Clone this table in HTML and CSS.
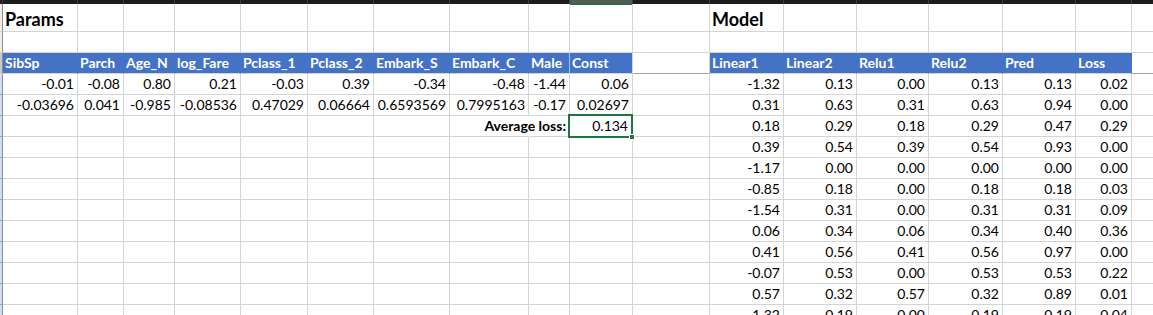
FILE: index.html
```html
<!DOCTYPE html>
<html lang="en">
<head>
<meta charset="utf-8">
<title>Params / Model</title>
<link rel="stylesheet" href="styles.css">
</head>
<body>
<div class="sheet">
  <!-- column header strip -->
  <div class="t"></div><div class="t"></div><div class="t"></div><div class="t"></div><div class="t"></div><div class="t"></div><div class="t"></div><div class="t"></div><div class="t"></div><div class="t"></div><div class="t on"></div><div class="t"></div><div class="t"></div><div class="t"></div><div class="t"></div><div class="t"></div><div class="t"></div><div class="t"></div><div class="t"></div>

  <!-- row 1 -->
  <div class="s"></div>
  <div class="c title">Params</div>
  <div class="c"></div><div class="c"></div><div class="c"></div><div class="c"></div><div class="c"></div><div class="c"></div><div class="c"></div><div class="c"></div><div class="c"></div><div class="c"></div>
  <div class="c title">Model</div>
  <div class="c"></div><div class="c"></div><div class="c"></div><div class="c"></div><div class="c"></div><div class="c"></div>

  <!-- row 2 -->
  <div class="s"></div>
  <div class="c"></div><div class="c"></div><div class="c"></div><div class="c"></div><div class="c"></div><div class="c"></div><div class="c"></div><div class="c"></div><div class="c"></div><div class="c"></div><div class="c"></div><div class="c"></div><div class="c"></div><div class="c"></div><div class="c"></div><div class="c"></div><div class="c"></div><div class="c"></div>

  <!-- row 3: headers -->
  <div class="s hs"></div>
  <div class="c h">SibSp</div><div class="c h">Parch</div><div class="c h">Age_N</div><div class="c h">log_Fare</div><div class="c h">Pclass_1</div><div class="c h">Pclass_2</div><div class="c h">Embark_S</div><div class="c h">Embark_C</div><div class="c h split">Male</div><div class="c h last">Const</div>
  <div class="c hb"></div>
  <div class="c h">Linear1</div><div class="c h">Linear2</div><div class="c h">Relu1</div><div class="c h">Relu2</div><div class="c h">Pred</div><div class="c h">Loss</div>
  <div class="c hb"></div>

  <!-- row 4 -->
  <div class="s sel"></div>
  <div class="c">-0.01</div><div class="c">-0.08</div><div class="c">0.80</div><div class="c">0.21</div><div class="c">-0.03</div><div class="c">0.39</div><div class="c">-0.34</div><div class="c">-0.48</div><div class="c">-1.44</div><div class="c">0.06</div>
  <div class="c"></div>
  <div class="c">-1.32</div><div class="c">0.13</div><div class="c">0.00</div><div class="c">0.13</div><div class="c">0.13</div><div class="c">0.02</div>
  <div class="c"></div>

  <!-- row 5 -->
  <div class="s sel"></div>
  <div class="c">-0.03696</div><div class="c">0.041</div><div class="c">-0.985</div><div class="c">-0.08536</div><div class="c">0.47029</div><div class="c">0.06664</div><div class="c">0.6593569</div><div class="c">0.7995163</div><div class="c">-0.17</div><div class="c">0.02697</div>
  <div class="c"></div>
  <div class="c">0.31</div><div class="c">0.63</div><div class="c">0.31</div><div class="c">0.63</div><div class="c">0.94</div><div class="c">0.00</div>
  <div class="c"></div>

  <!-- row 6 -->
  <div class="s sel"></div>
  <div class="c"></div><div class="c"></div><div class="c"></div><div class="c"></div><div class="c"></div><div class="c"></div><div class="c"></div>
  <div class="c nb"></div>
  <div class="c lbl">Average loss:</div>
  <div class="c pick">0.134</div>
  <div class="c"></div>
  <div class="c">0.18</div><div class="c">0.29</div><div class="c">0.18</div><div class="c">0.29</div><div class="c">0.47</div><div class="c">0.29</div>
  <div class="c"></div>

  <!-- row 7 -->
  <div class="s sel"></div>
  <div class="c"></div><div class="c"></div><div class="c"></div><div class="c"></div><div class="c"></div><div class="c"></div><div class="c"></div><div class="c"></div><div class="c"></div><div class="c"></div><div class="c"></div>
  <div class="c">0.39</div><div class="c">0.54</div><div class="c">0.39</div><div class="c">0.54</div><div class="c">0.93</div><div class="c">0.00</div>
  <div class="c"></div>

  <!-- row 8 -->
  <div class="s sel"></div>
  <div class="c"></div><div class="c"></div><div class="c"></div><div class="c"></div><div class="c"></div><div class="c"></div><div class="c"></div><div class="c"></div><div class="c"></div><div class="c"></div><div class="c"></div>
  <div class="c">-1.17</div><div class="c">0.00</div><div class="c">0.00</div><div class="c">0.00</div><div class="c">0.00</div><div class="c">0.00</div>
  <div class="c"></div>

  <!-- row 9 -->
  <div class="s sel"></div>
  <div class="c"></div><div class="c"></div><div class="c"></div><div class="c"></div><div class="c"></div><div class="c"></div><div class="c"></div><div class="c"></div><div class="c"></div><div class="c"></div><div class="c"></div>
  <div class="c">-0.85</div><div class="c">0.18</div><div class="c">0.00</div><div class="c">0.18</div><div class="c">0.18</div><div class="c">0.03</div>
  <div class="c"></div>

  <!-- row 10 -->
  <div class="s sel"></div>
  <div class="c"></div><div class="c"></div><div class="c"></div><div class="c"></div><div class="c"></div><div class="c"></div><div class="c"></div><div class="c"></div><div class="c"></div><div class="c"></div><div class="c"></div>
  <div class="c">-1.54</div><div class="c">0.31</div><div class="c">0.00</div><div class="c">0.31</div><div class="c">0.31</div><div class="c">0.09</div>
  <div class="c"></div>

  <!-- row 11 -->
  <div class="s sel"></div>
  <div class="c"></div><div class="c"></div><div class="c"></div><div class="c"></div><div class="c"></div><div class="c"></div><div class="c"></div><div class="c"></div><div class="c"></div><div class="c"></div><div class="c"></div>
  <div class="c">0.06</div><div class="c">0.34</div><div class="c">0.06</div><div class="c">0.34</div><div class="c">0.40</div><div class="c">0.36</div>
  <div class="c"></div>

  <!-- row 12 -->
  <div class="s sel"></div>
  <div class="c"></div><div class="c"></div><div class="c"></div><div class="c"></div><div class="c"></div><div class="c"></div><div class="c"></div><div class="c"></div><div class="c"></div><div class="c"></div><div class="c"></div>
  <div class="c">0.41</div><div class="c">0.56</div><div class="c">0.41</div><div class="c">0.56</div><div class="c">0.97</div><div class="c">0.00</div>
  <div class="c"></div>

  <!-- row 13 -->
  <div class="s sel"></div>
  <div class="c"></div><div class="c"></div><div class="c"></div><div class="c"></div><div class="c"></div><div class="c"></div><div class="c"></div><div class="c"></div><div class="c"></div><div class="c"></div><div class="c"></div>
  <div class="c">-0.07</div><div class="c">0.53</div><div class="c">0.00</div><div class="c">0.53</div><div class="c">0.53</div><div class="c">0.22</div>
  <div class="c"></div>

  <!-- row 14 -->
  <div class="s sel"></div>
  <div class="c"></div><div class="c"></div><div class="c"></div><div class="c"></div><div class="c"></div><div class="c"></div><div class="c"></div><div class="c"></div><div class="c"></div><div class="c"></div><div class="c"></div>
  <div class="c">0.57</div><div class="c">0.32</div><div class="c">0.57</div><div class="c">0.32</div><div class="c">0.89</div><div class="c">0.01</div>
  <div class="c"></div>

  <!-- row 15 -->
  <div class="s sel"></div>
  <div class="c"></div><div class="c"></div><div class="c"></div><div class="c"></div><div class="c"></div><div class="c"></div><div class="c"></div><div class="c"></div><div class="c"></div><div class="c"></div><div class="c"></div>
  <div class="c">-1.32</div><div class="c">0.19</div><div class="c">0.00</div><div class="c">0.19</div><div class="c">0.19</div><div class="c">0.04</div>
  <div class="c"></div>
</div>
</body>
</html>
```

FILE: styles.css
```css
html, body {
  margin: 0;
  padding: 0;
  background: #ffffff;
}

body {
  width: 1153px;
  height: 315px;
  overflow: hidden;
  font-family: Lato, "Liberation Sans", sans-serif;
}

.sheet {
  display: grid;
  grid-template-columns: 3px 75px 46px 51px 66px 67px 66px 76px 79px 41px 63px 77px 74px 73px 72px 74px 73px 56px 22px;
  grid-template-rows: 4px 28px repeat(14, 21px);
}

/* column header strip (top) */
.t {
  background: #1c1c1c;
  border-right: 1px solid #3a3a3a;
  box-sizing: border-box;
}

.t.on {
  background: #585858;
  box-shadow: inset 0 -1px 0 #217346, 0 1px 0 #217346;
}

/* row header strip (left) */
.s {
  box-sizing: border-box;
  background: #ececec;
  border-right: 1px solid #8e8e8e;
  border-bottom: 1px solid #d2d2d2;
}

.s.hs {
  background: #c9c9c9;
}

.s.sel {
  background: #d3ddf1;
  border-bottom-color: #8fa8d8;
}

/* cells */
.c {
  box-sizing: border-box;
  min-width: 0;
  border-right: 1px solid #d4d4d4;
  border-bottom: 1px solid #d4d4d4;
  padding: 0 3px 0 2px;
  font-size: 14px;
  line-height: 20px;
  text-align: right;
  white-space: nowrap;
  color: #000000;
}

.title {
  display: flex;
  align-items: flex-end;
  justify-content: flex-start;
  padding-left: 2px;
  padding-bottom: 1px;
  font-size: 18px;
  font-weight: 700;
  line-height: 22px;
}

.h {
  background: #4472c4;
  border-right-color: #4472c4;
  color: #ffffff;
  font-weight: 700;
  text-align: left;
  padding-left: 2px;
}

.h.split {
  border-right-color: #a9bde6;
}

.h.last {
  border-right-color: #d4d4d4;
}

.hb {
  border-bottom-color: #a3a3a3;
}

.nb {
  border-right-color: transparent;
}

.lbl {
  display: flex;
  justify-content: flex-end;
  font-weight: 700;
}

.pick {
  position: relative;
  padding-right: 4px;
}

.pick::after {
  content: "";
  position: absolute;
  left: -2px;
  top: -2px;
  right: -1px;
  bottom: -2px;
  border: 2px solid #217346;
  z-index: 1;
}

.pick::before {
  content: "";
  position: absolute;
  right: -3px;
  bottom: -4px;
  width: 4px;
  height: 4px;
  background: #217346;
  border: 1px solid #ffffff;
  z-index: 2;
}
```
